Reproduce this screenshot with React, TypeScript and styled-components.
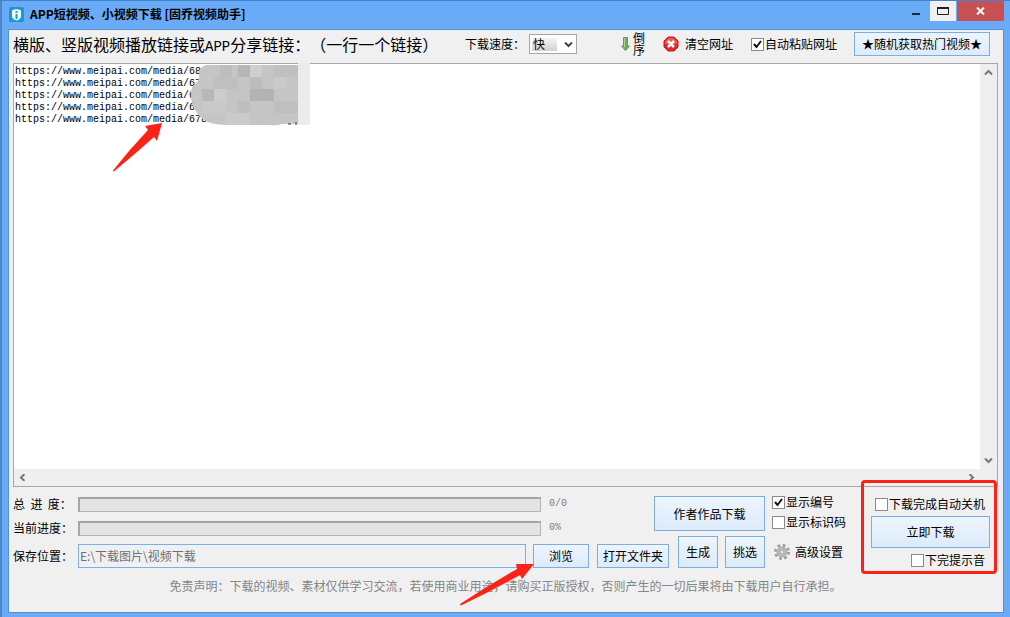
import React, { useState } from "react";
import styled, { createGlobalStyle } from "styled-components";

const GlobalStyle = createGlobalStyle`
  * { box-sizing: border-box; }
  body {
    margin: 0;
    background: #6aabf8;
    color: #000;
    font: 12px/16px "Noto Sans CJK SC", sans-serif;
    text-spacing-trim: space-all;
  }
  button, input, select, textarea { font: inherit; color: inherit; margin: 0; }
  button { cursor: pointer; }
`;

const Frame = styled.div`
  display: flex;
  flex-direction: column;
  min-height: 100vh;
  padding: 0 6px 4px;
  background: #6aabf8;
  border-top: 1px solid #3f84cc;
  border-left: 2px solid #4a87cb;
`;

const TitleBar = styled.header`
  display: flex;
  align-items: flex-start;
  height: 28px;
`;

const Title = styled.h1`
  flex: 1;
  display: flex;
  align-items: center;
  gap: 6px;
  height: 26px;
  margin: 0;
  padding-left: 1px;
  font-size: 12px;
  line-height: 16px;
  font-weight: bold;
`;

const CaptionButton = styled.button<{ $width: number; $bg?: string }>`
  display: flex;
  align-items: center;
  justify-content: center;
  width: ${(p) => p.$width}px;
  height: 20px;
  padding: 0;
  border: 0;
  background: ${(p) => p.$bg || "transparent"};
  margin-right: 1px;
  &:last-child { margin-right: 0; }
`;

const Client = styled.main`
  flex: 1;
  display: flex;
  flex-direction: column;
  padding: 0 5px 0 4px;
  background: #f0f0f0;
  border: 1px solid #5990d0;
`;

const Toolbar = styled.div`
  display: flex;
  align-items: center;
  padding: 2px 8px 7px 0;
  white-space: nowrap;
`;

const Heading = styled.label`
  flex: 1;
  font-size: 16px;
  line-height: 24px;
`;

const HeadingLatin = styled.span`
  font-family: "Liberation Mono", monospace;
  font-size: 14px;
  line-height: 16px;
`;

const SpeedField = styled.div`
  display: flex;
  align-items: center;
  gap: 4px;
  margin-right: 44px;
`;

const SelectWrap = styled.div`
  position: relative;
  width: 48px;
  height: 20px;
  svg { position: absolute; right: 4px; top: 7px; pointer-events: none; }
`;

const Select = styled.select`
  appearance: none;
  width: 100%;
  height: 100%;
  padding: 0 0 0 3px;
  border: 1px solid #a5a5a5;
  border-radius: 0;
  background: linear-gradient(#f4f4f4, #d2d2d2) 2px 3px / 25px 13px no-repeat #fff;
`;

const ToolButton = styled.button<{ $gap: number }>`
  display: flex;
  align-items: center;
  gap: ${(p) => p.$gap}px;
  height: 24px;
  margin-right: 18px;
  padding: 0;
  border: 0;
  background: transparent;
`;

const Stacked = styled.span`
  width: 12px;
  line-height: 12px;
  white-space: normal;
`;

const CheckLabel = styled.label`
  display: flex;
  align-items: center;
  gap: 1px;
  line-height: 16px;
  white-space: nowrap;
`;

const CheckInput = styled.input`
  appearance: none;
  flex: none;
  width: 13px;
  height: 13px;
  border: 1px solid #8a8a8a;
  background: #fff;
  &:checked {
    background: #fff
      url("data:image/svg+xml,%3Csvg xmlns='http://www.w3.org/2000/svg' viewBox='0 0 11 11'%3E%3Cpath d='M2 5l2.5 3L9 2' fill='none' stroke='%23111' stroke-width='2'/%3E%3C/svg%3E")
      center / 11px 11px no-repeat;
  }
`;

const PushButton = styled.button<{ $width: number; $height: number }>`
  flex: none;
  width: ${(p) => p.$width}px;
  height: ${(p) => p.$height}px;
  padding: 0;
  border: 1px solid #7fadde;
  background: linear-gradient(#edf5fc, #dcebfa);
  white-space: nowrap;
`;

const HotButton = styled(PushButton)`
  margin-left: 17px;
`;

const Editor = styled.section`
  position: relative;
  flex: 1;
  display: grid;
  grid-template-columns: 1fr 17px;
  grid-template-rows: 1fr 17px;
  min-height: 120px;
  border: 1px solid #a6a6ab;
  background: #efefef;
`;

const UrlInput = styled.textarea`
  width: 100%;
  height: 100%;
  padding: 2px 1px;
  border: 0;
  outline: 0;
  resize: none;
  overflow: hidden;
  white-space: pre;
  background: #fff;
  font-family: "Liberation Mono", monospace;
  font-size: 10px;
  line-height: 12px;
`;

const ScrollTrack = styled.div<{ $vertical?: boolean }>`
  display: flex;
  flex-direction: ${(p) => (p.$vertical ? "column" : "row")};
  justify-content: space-between;
`;

const ScrollButton = styled.button`
  display: flex;
  align-items: center;
  justify-content: center;
  width: 17px;
  height: 17px;
  padding: 0;
  border: 0;
  background: transparent;
`;

const Mosaic = styled.svg`
  position: absolute;
  left: 176px;
  top: -1px;
  pointer-events: none;
`;

const TextArrow = styled.svg`
  position: absolute;
  left: 97px;
  top: 58px;
  pointer-events: none;
`;

const Controls = styled.section`
  display: flex;
  gap: 7px;
  padding: 9px 8px 0 0;
`;

const MainControls = styled.div`
  flex: 1;
  display: flex;
  flex-direction: column;
`;

const TopRow = styled.div`
  display: flex;
  height: 40px;
`;

const ProgressList = styled.div`
  flex: 1;
  display: flex;
  flex-direction: column;
  gap: 8px;
`;

const ProgressRow = styled.div`
  display: flex;
  align-items: center;
  height: 16px;
`;

const RowLabel = styled.label`
  flex: none;
  width: 65px;
  white-space: pre;
`;

const Track = styled.div`
  flex: 1;
  height: 15px;
  border: 1px solid #b4b4b4;
  border-top: 2px solid #a5a5a5;
  border-left: 2px solid #a5a5a5;
  background: #e3e3e3;
`;

const ProgressValue = styled.span`
  width: 113px;
  padding-left: 8px;
  color: #7d7d7d;
  font-family: "Liberation Mono", monospace;
  font-size: 10px;
`;

const SaveRow = styled.div`
  display: flex;
  align-items: flex-end;
`;

const SaveLabel = styled(RowLabel)`
  line-height: 24px;
`;

const PathInput = styled.input`
  flex: 1;
  min-width: 0;
  height: 24px;
  margin-right: 7px;
  padding: 0 1px 2px;
  border: 1px solid #82aedb;
  background: #f0f0f0;
  box-shadow: inset 0 0 0 2px #eaf3fc;
  color: #707070;
`;

const BrowseWrap = styled.div`
  position: relative;
  display: flex;
  margin-right: 8px;
  svg { position: absolute; left: -74px; top: 16px; pointer-events: none; }
`;

const PairedButtons = styled.div`
  display: flex;
  gap: 7px;
  margin-left: 9px;
`;

const Options = styled.div`
  display: flex;
  flex-direction: column;
  gap: 4px;
  width: 92px;
  margin-top: -2px;
`;

const SettingsButton = styled.button`
  display: flex;
  align-items: center;
  gap: 5px;
  margin-top: 10px;
  padding: 0 2px;
  border: 0;
  background: transparent;
`;

const StartGroup = styled.div`
  position: relative;
  display: flex;
  flex-direction: column;
  align-items: flex-end;
  gap: 4px;
  width: 119px;
  &::after {
    content: "";
    position: absolute;
    inset: -16px -7px -6px -10px;
    border: 3px solid #fb2218;
    border-radius: 4px;
    pointer-events: none;
  }
`;

const GroupCheck = styled.div`
  padding-right: 5px;
`;

const Disclaimer = styled.p`
  margin: 10px 0 18px;
  color: #858585;
  text-align: center;
`;

function Check(props: { label: string; checked?: boolean }) {
  const [on, setOn] = useState(!!props.checked);
  return (
    <CheckLabel>
      <CheckInput type="checkbox" checked={on} onChange={(e) => setOn(e.target.checked)} />
      {props.label}
    </CheckLabel>
  );
}

function Chevron({ turn = 0, color = "#777" }: { turn?: number; color?: string }) {
  return (
    <svg width="9" height="7" viewBox="0 0 9 7">
      <path d="M1 1.5l3.5 3.5L8 1.5" transform={`rotate(${turn} 4.5 3.5)`} fill="none" stroke={color} strokeWidth="2" />
    </svg>
  );
}

const urls = ["68", "67", "6", "6", "678"].map((id) => "https://www.meipai.com/media/" + id).join("\n");

const mosaicBlocks: [number, number, number, number, string][] = [
  [30, 2, 12, 12, "#bdbdbd"],
  [48, 2, 12, 12, "#b6b6b6"],
  [60, 2, 12, 12, "#cfcfcf"],
  [84, 2, 24, 12, "#c0c0c0"],
  [24, 14, 24, 12, "#bfbfbf"],
  [60, 14, 12, 12, "#bcbcbc"],
  [84, 14, 12, 12, "#cacaca"],
  [12, 26, 12, 12, "#b8b8b8"],
  [24, 26, 12, 12, "#cdcdcd"],
  [60, 26, 24, 12, "#b3b3b3"],
  [12, 38, 24, 12, "#c9c9c9"],
  [48, 38, 12, 12, "#bebebe"],
  [84, 38, 24, 12, "#bfbfbf"],
  [36, 50, 24, 12, "#cacaca"],
];

export default function App() {
  return (
    <>
      <GlobalStyle />
      <Frame>
        <TitleBar>
          <Title>
            <svg width="15" height="15" viewBox="0 0 15 15">
              <rect width="15" height="15" rx="2" fill="#159bd3" />
              <path d="M3 3.5Q7.500 1 12 3.500V9Q12 12 7.500 13.500Q3 12 3 9Z" fill="#fff" />
              <rect x="6.500" y="4" width="2" height="2" fill="#159bd3" />
              <rect x="6.500" y="7" width="2" height="5" fill="#159bd3" />
            </svg>
            APP短视频、小视频下载 [固乔视频助手]
          </Title>
          <CaptionButton $width={26} aria-label="最小化">
            <svg width="10" height="10"><rect x="1" y="7" width="8" height="2" fill="#182a3e" /></svg>
          </CaptionButton>
          <CaptionButton $width={26} $bg="#f0f0f0" aria-label="最大化">
            <svg width="12" height="8"><path d="M.5 0v7.500h11V0" fill="none" stroke="#282018" /><rect width="12" height="2" fill="#282018" /></svg>
          </CaptionButton>
          <CaptionButton $width={47} $bg="#c75052" aria-label="关闭">
            <svg width="9" height="8"><path d="M1 .5l7 7M8 .5l-7 7" stroke="#fff" strokeWidth="2" /></svg>
          </CaptionButton>
        </TitleBar>

        <Client>
          <Toolbar>
            <Heading htmlFor="urls">
              横版、竖版视频播放链接或<HeadingLatin>APP</HeadingLatin>分享链接：（一行一个链接）
            </Heading>
            <SpeedField>
              <label htmlFor="speed">下载速度：</label>
              <SelectWrap>
                <Select id="speed" defaultValue="快">
                  <option>快</option>
                  <option>慢</option>
                </Select>
                <Chevron color="#444" />
              </SelectWrap>
            </SpeedField>
            <ToolButton $gap={3}>
              <svg width="9" height="14" viewBox="0 0 9 14">
                <path d="M2.500 .5h4v8.500h2L4.500 13.500.5 9h2z" fill="#6fae63" stroke="#5f9d59" />
                <path d="M3.500 1v9" stroke="#a9d59b" />
              </svg>
              <Stacked>倒序</Stacked>
            </ToolButton>
            <ToolButton $gap={6}>
              <svg width="16" height="16" viewBox="0 0 16 16">
                <path d="M5 1h6l4 4v6l-4 4H5l-4-4V5z" fill="#e02a2a" stroke="#c01d1f" />
                <path d="M5.500 2h5L14 5.500V8H2V5.500z" fill="#f0595a" />
                <path d="M5 5l6 6M11 5l-6 6" stroke="#fff" strokeWidth="2.500" />
              </svg>
              清空网址
            </ToolButton>
            <Check label="自动粘贴网址" checked />
            <HotButton $width={136} $height={24}>★随机获取热门视频★</HotButton>
          </Toolbar>

          <Editor>
            <UrlInput id="urls" defaultValue={urls} spellCheck={false} />
            <ScrollTrack $vertical>
              <ScrollButton aria-label="向上滚动"><Chevron turn={180} /></ScrollButton>
              <ScrollButton aria-label="向下滚动"><Chevron /></ScrollButton>
            </ScrollTrack>
            <ScrollTrack>
              <ScrollButton aria-label="向左滚动"><Chevron turn={90} /></ScrollButton>
              <ScrollButton aria-label="向右滚动"><Chevron turn={-90} /></ScrollButton>
            </ScrollTrack>
            <Mosaic width="120" height="64" viewBox="0 0 120 64">
              <clipPath id="blob">
                <path d="M17 2H108V61H92Q88 63 80 62H40Q24 62 18 59Q8 54 6 48Q2 44 1 34Q0 24 6 20Q10 17 9 8Q11 3 17 2Z" />
              </clipPath>
              <rect x="108" y="0" width="12" height="62" fill="#ebebeb" />
              <g clipPath="url(#blob)">
                <rect width="120" height="64" fill="#c5c5c5" />
                {mosaicBlocks.map(([x, y, w, h, fill]) => (
                  <rect key={`${x}-${y}`} x={x} y={y} width={w} height={h} fill={fill} />
                ))}
              </g>
              <path d="M98 61h3M106 59v3" stroke="#333" />
            </Mosaic>
            <TextArrow width="54" height="52" viewBox="0 0 54 52">
              <path d="M51 1L34 4L37 8Q18 28 2 48.500Q2 50 3.500 49Q24 32 43 15L46 19Z" fill="#fb2318" />
            </TextArrow>
          </Editor>

          <Controls>
            <MainControls>
              <TopRow>
                <ProgressList>
                  <ProgressRow>
                    <RowLabel as="span">{"总  进  度："}</RowLabel>
                    <Track role="progressbar" aria-label="总进度" aria-valuenow={0} />
                    <ProgressValue>0/0</ProgressValue>
                  </ProgressRow>
                  <ProgressRow>
                    <RowLabel as="span">当前进度：</RowLabel>
                    <Track role="progressbar" aria-label="当前进度" aria-valuenow={0} />
                    <ProgressValue>0%</ProgressValue>
                  </ProgressRow>
                </ProgressList>
                <PushButton $width={111} $height={35}>作者作品下载</PushButton>
              </TopRow>
              <SaveRow>
                <SaveLabel htmlFor="path">保存位置：</SaveLabel>
                <PathInput id="path" readOnly value="E:\下载图片\视频下载" />
                <BrowseWrap>
                  <PushButton $width={56} $height={24}>浏览</PushButton>
                  <svg width="76" height="46" viewBox="0 0 76 46">
                    <path d="M75 4L57 4L58 9Q28 26 1 44Q1 46 3 45Q32 31 61 15L63 19Z" fill="#fb2318" />
                  </svg>
                </BrowseWrap>
                <PushButton $width={72} $height={24}>打开文件夹</PushButton>
                <PairedButtons>
                  <PushButton $width={40} $height={32}>生成</PushButton>
                  <PushButton $width={40} $height={32}>挑选</PushButton>
                </PairedButtons>
              </SaveRow>
            </MainControls>
            <Options>
              <Check label="显示编号" checked />
              <Check label="显示标识码" />
              <SettingsButton>
                <svg width="16" height="16" viewBox="0 0 16 16">
                  <circle cx="8" cy="8" r="6.500" fill="none" stroke="#9c9c9c" strokeWidth="3" strokeDasharray="2.550 2.550" />
                  <circle cx="8" cy="8" r="4" fill="#eee" stroke="#b5b5b5" strokeWidth="3" />
                  <circle cx="8" cy="8" r="2" fill="#f0f0f0" stroke="#999" />
                </svg>
                高级设置
              </SettingsButton>
            </Options>
            <StartGroup>
              <GroupCheck><Check label="下载完成自动关机" /></GroupCheck>
              <PushButton $width={119} $height={32}>立即下载</PushButton>
              <GroupCheck><Check label="下完提示音" /></GroupCheck>
            </StartGroup>
          </Controls>

          <Disclaimer>
            免责声明：下载的视频、素材仅供学习交流，若使用商业用途，请购买正版授权，否则产生的一切后果将由下载用户自行承担。
          </Disclaimer>
        </Client>
      </Frame>
    </>
  );
}
